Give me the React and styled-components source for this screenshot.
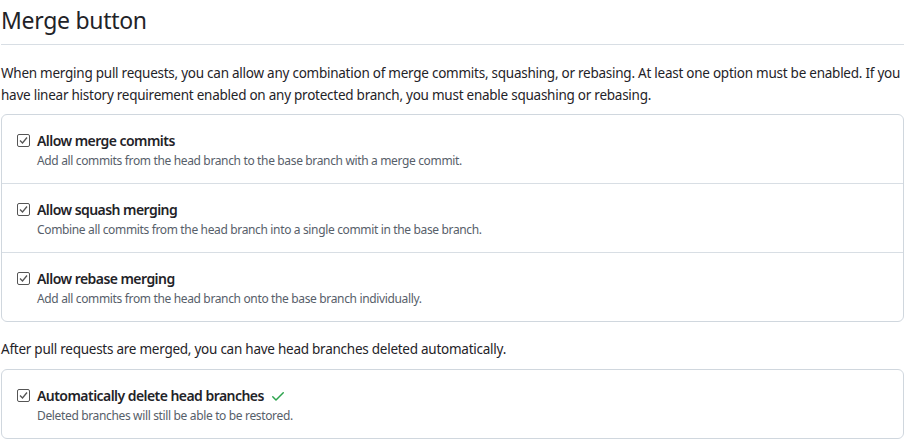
import styled, { createGlobalStyle } from "styled-components";

const GlobalStyle = createGlobalStyle`
  html, body {
    margin: 0;
    padding: 0;
    background: #ffffff;
  }
  body {
    font-family: "Noto Sans", "Liberation Sans", sans-serif;
    color: #1f2328;
  }
`;

const Page = styled.div`
  width: 903px;
  padding: 0 0 0 1px;
`;

const Heading = styled.h2`
  margin: 0;
  padding: 5px 0 8px;
  font-size: 23px;
  font-weight: 400;
  line-height: 31px;
  letter-spacing: -0.3px;
  border-bottom: 1px solid #d8dee4;
  color: #1f2328;
`;

const Note = styled.p`
  margin: ${(p) => p.$top || 16}px 0 ${(p) => p.$bottom || 8}px;
  font-size: 13.5px;
  line-height: 22px;
  letter-spacing: -0.25px;
`;

const Box = styled.div`
  border: 1px solid #d0d7de;
  border-radius: 6px;
  margin-bottom: ${(p) => p.$bottom || 0}px;
`;

const Row = styled.label`
  display: flex;
  gap: 7px;
  padding: 18px 15px 13px;
  min-height: 36px;
  & + & {
    border-top: 1px solid #d8dee4;
  }
`;

const CheckBox = styled.span`
  flex: none;
  width: 13px;
  height: 13px;
  margin-top: 1px;
  border: 1px solid #555;
  border-radius: 2px;
  box-sizing: border-box;
  display: flex;
  align-items: center;
  justify-content: center;
  background: #fff;
  svg {
    display: block;
  }
`;

const Text = styled.div`
  display: flex;
  flex-direction: column;
`;

const Title = styled.div`
  display: flex;
  align-items: center;
  gap: 6px;
  font-size: 14px;
  font-weight: 600;
  line-height: 16px;
  letter-spacing: -0.55px;
`;

const Desc = styled.div`
  font-size: 12px;
  line-height: 18px;
  margin-top: 3px;
  color: #57606a;
  letter-spacing: -0.35px;
`;

function Tick() {
  return (
    <CheckBox>
      <svg width="11" height="11" viewBox="0 0 11 11">
        <path d="M2 5.5 L4.5 8 L9 2.5" fill="none" stroke="#555" strokeWidth="1.3" />
      </svg>
    </CheckBox>
  );
}

function Option({ title, desc, ok }) {
  return (
    <Row>
      <Tick />
      <Text>
        <Title>
          {title}
          {ok && (
            <svg width="16" height="16" viewBox="0 0 16 16">
              <path
                d="M13.78 4.22a.75.75 0 0 1 0 1.06l-7.25 7.25a.75.75 0 0 1-1.06 0L2.22 9.28a.751.751 0 0 1 1.06-1.06L6 10.94l6.72-6.72a.75.75 0 0 1 1.06 0Z"
                fill="#2da44e"
              />
            </svg>
          )}
        </Title>
        <Desc>{desc}</Desc>
      </Text>
    </Row>
  );
}

export default function App() {
  return (
    <>
      <GlobalStyle />
      <Page>
        <Heading>Merge button</Heading>
        <Note $top={17}>
          When merging pull requests, you can allow any combination of merge commits, squashing, or
          rebasing. At least one option must be enabled. If you have linear history requirement
          enabled on any protected branch, you must enable squashing or rebasing.
        </Note>
        <Box $bottom={15}>
          <Option
            title="Allow merge commits"
            desc="Add all commits from the head branch to the base branch with a merge commit."
          />
          <Option
            title="Allow squash merging"
            desc="Combine all commits from the head branch into a single commit in the base branch."
          />
          <Option
            title="Allow rebase merging"
            desc="Add all commits from the head branch onto the base branch individually."
          />
        </Box>
        <Note $top={0} $bottom={9}>
          After pull requests are merged, you can have head branches deleted automatically.
        </Note>
        <Box>
          <Option
            ok
            title="Automatically delete head branches"
            desc="Deleted branches will still be able to be restored."
          />
        </Box>
      </Page>
    </>
  );
}
